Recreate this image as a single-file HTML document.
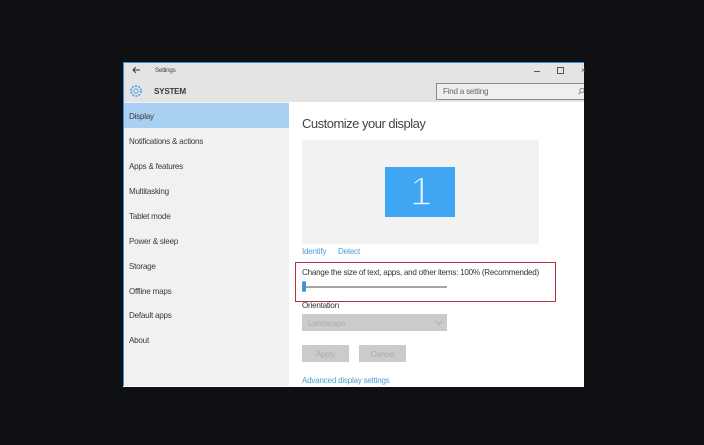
<!DOCTYPE html>
<html><head><meta charset="utf-8"><style>
html,body{margin:0;padding:0;background:#0e1013;width:704px;height:445px;overflow:hidden}
body{position:relative;font-family:"Liberation Sans",sans-serif;color:#333}
div{position:absolute;white-space:nowrap}
#w{left:0;top:0;width:704px;height:445px;filter:blur(.35px)}
#w div{font-size:8.1px;letter-spacing:-.24px}
#w .n{left:129px;line-height:14px;color:#3a3a3a}
#w .l{color:#4b9fd8;line-height:14px}
</style></head><body><div id="w">
<div style="left:123px;top:62px;width:461px;height:325px;background:#fff;border-top:1px solid #3f8fd0;box-sizing:border-box"></div>
<div style="left:123px;top:63px;width:461px;height:39px;background:#e4e4e4"></div>
<div style="left:124px;top:102px;width:165px;height:284px;background:#f1f1f1"></div>
<div style="left:123px;top:63px;width:1px;height:323px;background:#3f8fd0"></div>
<div style="left:124px;top:103px;width:165px;height:25px;background:#a8d0f3"></div>
<svg style="position:absolute;left:131px;top:65px" width="10" height="10" viewBox="0 0 10 10"><path d="M9 5H2M4.8 2.2L2 5l2.8 2.8" fill="none" stroke="#333" stroke-width="1"/></svg>
<div style="left:155px;top:66px;font-size:6.2px;line-height:10px;color:#444">Settings</div>
<svg style="position:absolute;left:129px;top:84px" width="14" height="14" viewBox="0 0 14 14"><circle cx="7" cy="7" r="2.2" fill="none" stroke="#5aa5e0"/><circle cx="7" cy="7" r="5" fill="none" stroke="#5aa5e0" stroke-width="1.8" stroke-dasharray="2 1.2"/></svg>
<div style="left:154px;top:86px;line-height:11px;font-weight:bold;color:#3a3a3a">SYSTEM</div>
<div style="left:534px;top:71px;width:6px;height:1px;background:#555"></div>
<div style="left:557px;top:67px;width:5px;height:5px;border:1px solid #555"></div>
<div style="left:581px;top:66px;line-height:9px;color:#555">×</div>
<div style="left:436px;top:83px;width:148px;height:17px;border:1px solid #8a8a8a;border-right:0;background:#efefef;box-sizing:border-box"></div>
<div style="left:443px;top:85px;line-height:14px;color:#666">Find a setting</div>
<svg style="position:absolute;left:578px;top:87px" width="6" height="9" viewBox="0 0 6 9"><circle cx="4" cy="3.4" r="2.2" fill="none" stroke="#888"/><path d="M2.4 5L.6 7.4" stroke="#888"/></svg>
<div class="n" style="top:110px">Display</div>
<div class="n" style="top:135px">Notifications &amp; actions</div>
<div class="n" style="top:160px">Apps &amp; features</div>
<div class="n" style="top:185px">Multitasking</div>
<div class="n" style="top:210px">Tablet mode</div>
<div class="n" style="top:235px">Power &amp; sleep</div>
<div class="n" style="top:260px">Storage</div>
<div class="n" style="top:285px">Offline maps</div>
<div class="n" style="top:309px">Default apps</div>
<div class="n" style="top:334px">About</div>
<div style="left:302px;top:115px;font-size:13px;letter-spacing:-.5px;line-height:17px;color:#444">Customize your display</div>
<div style="left:302px;top:140px;width:237px;height:104px;background:#f2f2f2"></div>
<div style="left:385px;top:167px;width:70px;height:50px;background:#3fa6f3"></div>
<div style="left:386px;top:167px;width:70px;text-align:center;font-size:40px;letter-spacing:0;line-height:50px;color:#eef7ff;-webkit-text-stroke:1.5px #3fa6f3">1</div>
<div class="l" style="left:302px;top:245px">Identify</div>
<div class="l" style="left:338px;top:245px">Detect</div>
<div style="left:295px;top:262px;width:261px;height:40px;border:1px solid #b5313f;box-sizing:border-box"></div>
<div style="left:302px;top:266px;line-height:14px;color:#333">Change the size of text, apps, and other items: 100% (Recommended)</div>
<div style="left:302px;top:286px;width:145px;height:1.5px;background:#a5a5a5"></div>
<div style="left:302px;top:281px;width:4px;height:11px;background:#3f95dc;border-radius:2px"></div>
<div style="left:302px;top:299px;line-height:14px;color:#333">Orientation</div>
<div style="left:302px;top:314px;width:145px;height:17px;background:#cbcbcb"></div>
<div style="left:308px;top:317px;line-height:14px;color:#aeaeae">Landscape</div>
<svg style="position:absolute;left:435px;top:320px" width="8" height="6" viewBox="0 0 8 6"><path d="M1 1.5l3 3 3-3" fill="none" stroke="#b0b0b0"/></svg>
<div style="left:302px;top:345px;width:47px;height:17px;background:#cbcbcb;text-align:center;line-height:19px;color:#aeaeae">Apply</div>
<div style="left:359px;top:345px;width:47px;height:17px;background:#cbcbcb;text-align:center;line-height:19px;color:#aeaeae">Cancel</div>
<div class="l" style="left:302px;top:374px">Advanced display settings</div>
<div style="left:0;top:387px;width:704px;height:58px;background:#0e1013"></div>
</div></body></html>
